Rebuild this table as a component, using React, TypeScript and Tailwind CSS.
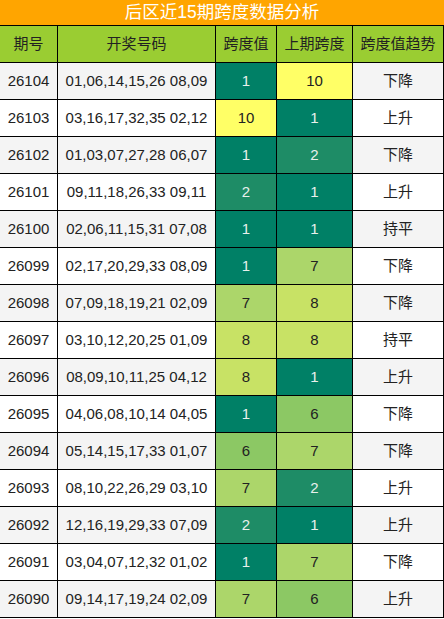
const rows: [string, string, number, number, string][] = [
  ["26104", "01,06,14,15,26 08,09", 1, 10, "下降"],
  ["26103", "03,16,17,32,35 02,12", 10, 1, "上升"],
  ["26102", "01,03,07,27,28 06,07", 1, 2, "下降"],
  ["26101", "09,11,18,26,33 09,11", 2, 1, "上升"],
  ["26100", "02,06,11,15,31 07,08", 1, 1, "持平"],
  ["26099", "02,17,20,29,33 08,09", 1, 7, "下降"],
  ["26098", "07,09,18,19,21 02,09", 7, 8, "下降"],
  ["26097", "03,10,12,20,25 01,09", 8, 8, "持平"],
  ["26096", "08,09,10,11,25 04,12", 8, 1, "上升"],
  ["26095", "04,06,08,10,14 04,05", 1, 6, "下降"],
  ["26094", "05,14,15,17,33 01,07", 6, 7, "下降"],
  ["26093", "08,10,22,26,29 03,10", 7, 2, "上升"],
  ["26092", "12,16,19,29,33 07,09", 2, 1, "上升"],
  ["26091", "03,04,07,12,32 01,02", 1, 7, "下降"],
  ["26090", "09,14,17,19,24 02,09", 7, 6, "上升"],
];

// colour scale for span values
function spanColor(v: number) {
  switch (v) {
    case 1:
      return "bg-[#008066] text-[#e8f0ec]";
    case 2:
      return "bg-[#1e8c66] text-[#e8f0ec]";
    case 6:
      return "bg-[#8cc864] text-[#222]";
    case 7:
      return "bg-[#acd66a] text-[#222]";
    case 8:
      return "bg-[#c8e265] text-[#222]";
    default:
      return "bg-[#ffff66] text-[#222]";
  }
}

const cols = "grid grid-cols-[58px_158px_61px_76px_91px]";
const cell = "flex items-center justify-center border-r border-b border-black";

export default function App() {
  return (
    <div
      className="w-[444px] bg-white text-[15px] text-[#222]"
      style={{ fontFamily: '"Liberation Sans", "Noto Sans CJK SC", sans-serif' }}
    >
      <div className="flex h-[26px] items-center justify-center border-b border-black bg-[#ffa500] text-[17.5px] text-white">
        后区近15期跨度数据分析
      </div>
      <div className={cols + " h-[37px] bg-[#9acd32] text-[15px]"}>
        <div className={cell}>期号</div>
        <div className={cell}>开奖号码</div>
        <div className={cell}>跨度值</div>
        <div className={cell}>上期跨度</div>
        <div className={cell}>跨度值趋势</div>
      </div>
      {rows.map((r, i) => (
        <div
          key={r[0]}
          className={cols + " h-[37px] " + (i % 2 === 0 ? "bg-[#f4f4f4]" : "bg-white")}
        >
          <div className={cell}>{r[0]}</div>
          <div className={cell}>{r[1]}</div>
          <div className={cell + " " + spanColor(r[2])}>{r[2]}</div>
          <div className={cell + " " + spanColor(r[3])}>{r[3]}</div>
          <div className={cell}>{r[4]}</div>
        </div>
      ))}
    </div>
  );
}
